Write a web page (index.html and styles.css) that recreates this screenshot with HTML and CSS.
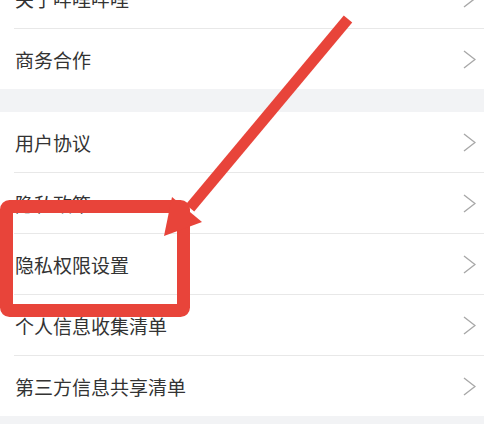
FILE: index.html
```html
<!DOCTYPE html>
<html lang="zh-CN">
<head>
  <meta charset="UTF-8">
  <meta name="viewport" content="width=device-width, initial-scale=1.0">
  <title>设置</title>
  <link rel="stylesheet" href="styles.css">
</head>
<body>
  <div class="page">
    <!-- About group -->
    <ul class="group group-top">
      <li class="item"><span class="label">关于哔哩哔哩</span><svg class="chevron" viewBox="0 0 13 19"><path d="M1 1 L12 9.5 L1 18"/></svg></li>
      <li class="item"><span class="label">商务合作</span><svg class="chevron" viewBox="0 0 13 19"><path d="M1 1 L12 9.5 L1 18"/></svg></li>
    </ul>

    <div class="gap"></div>

    <!-- Agreements group -->
    <ul class="group">
      <li class="item"><span class="label">用户协议</span><svg class="chevron" viewBox="0 0 13 19"><path d="M1 1 L12 9.5 L1 18"/></svg></li>
      <li class="item"><span class="label">隐私政策</span><svg class="chevron" viewBox="0 0 13 19"><path d="M1 1 L12 9.5 L1 18"/></svg></li>
      <li class="item"><span class="label">隐私权限设置</span><svg class="chevron" viewBox="0 0 13 19"><path d="M1 1 L12 9.5 L1 18"/></svg></li>
      <li class="item"><span class="label">个人信息收集清单</span><svg class="chevron" viewBox="0 0 13 19"><path d="M1 1 L12 9.5 L1 18"/></svg></li>
      <li class="item"><span class="label">第三方信息共享清单</span><svg class="chevron" viewBox="0 0 13 19"><path d="M1 1 L12 9.5 L1 18"/></svg></li>
    </ul>

    <div class="gap"></div>

    <!-- Annotation drawn over the list -->
    <svg class="annotation" viewBox="0 0 484 424">
      <rect class="mark-box" x="6.5" y="206.5" width="177" height="104" rx="3"/>
      <line class="mark-line" x1="348" y1="19" x2="190" y2="208"/>
      <polygon class="mark-head" points="172,197 202,222 164,236"/>
    </svg>
  </div>
</body>
</html>
```

FILE: styles.css
```css
body {
  margin: 0;
  background-color: #fff;
  font-family: "Noto Sans CJK SC", "Noto Sans", sans-serif;
  color: #333;
  overflow: hidden;
}

.page {
  position: relative;
  height: 424px;
  overflow: hidden;
}

.group {
  list-style: none;
  margin: 0;
  padding: 0;
  background-color: #fff;
}

.group-top {
  margin-top: -32px;
}

.item {
  display: flex;
  align-items: center;
  justify-content: space-between;
  height: 60px;
  margin-left: 14px;
  padding-left: 1px;
  padding-right: 8px;
  border-bottom: 1px solid #e8e8e8;
  font-size: 19px;
}

.item:last-child {
  border-bottom: none;
}

.label {
  line-height: 1;
}

.chevron {
  width: 13px;
  height: 19px;
  fill: none;
  stroke: #a8a8a8;
  stroke-width: 1.4;
}

.gap {
  height: 23px;
  background-color: #f2f3f5;
}

.annotation {
  position: absolute;
  left: 0;
  top: 0;
  width: 484px;
  height: 424px;
}

.mark-box {
  fill: none;
  stroke: #e8443a;
  stroke-width: 13;
}

.mark-line {
  stroke: #e8443a;
  stroke-width: 11;
}

.mark-head {
  fill: #e8443a;
}
```
